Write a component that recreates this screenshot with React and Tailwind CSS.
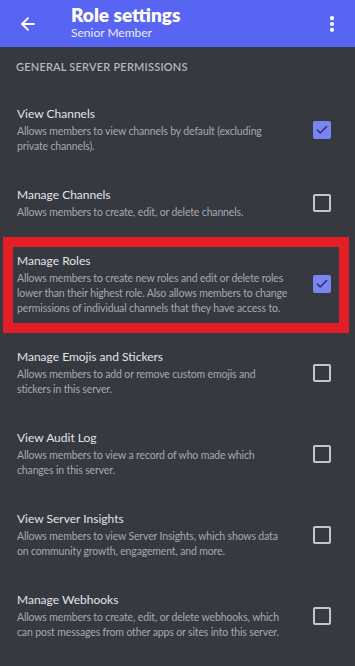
import { ArrowLeft, MoreVertical, Check } from "lucide-react";

// description lines are kept as in the app so the wraps match
const perms = [
  {
    title: "View Channels",
    desc: ["Allows members to view channels by default (excluding", "private channels)."],
    on: true,
  },
  {
    title: "Manage Channels",
    desc: ["Allows members to create, edit, or delete channels."],
    on: false,
  },
  {
    title: "Manage Roles",
    desc: [
      "Allows members to create new roles and edit or delete roles",
      "lower than their highest role. Also allows members to change",
      "permissions of individual channels that they have access to.",
    ],
    on: true,
    marked: true,
  },
  {
    title: "Manage Emojis and Stickers",
    desc: ["Allows members to add or remove custom emojis and", "stickers in this server."],
    on: false,
  },
  {
    title: "View Audit Log",
    desc: ["Allows members to view a record of who made which", "changes in this server."],
    on: false,
  },
  {
    title: "View Server Insights",
    desc: ["Allows members to view Server Insights, which shows data", "on community growth, engagement, and more."],
    on: false,
  },
  {
    title: "Manage Webhooks",
    desc: ["Allows members to create, edit, or delete webhooks, which", "can post messages from other apps or sites into this server."],
    on: false,
  },
];

function Checkbox({ on }) {
  if (on) {
    return (
      <div className="w-[18px] h-[18px] rounded-[2px] bg-[#7b85f2] flex items-center justify-center">
        <Check size={14} strokeWidth={2.5} className="text-[#2c2f5c]" />
      </div>
    );
  }
  return <div className="w-[18px] h-[18px] rounded-[2px] border-2 border-[#c4c6ca]" />;
}

function PermRow({ title, desc, on, marked }) {
  return (
    <div className="relative flex items-center pl-[17px] pr-[24px] py-[16px]">
      <div className="flex-1 min-w-0 pr-[16px]">
        <div className="text-[12px] leading-[18px] text-[#e3e4e6]">{title}</div>
        <div className="mt-[1px] text-[10.5px] leading-[15px] tracking-[-0.15px] text-[#a6a9ae]">
          {desc.map((line) => (
            <div key={line} className="whitespace-nowrap">{line}</div>
          ))}
        </div>
      </div>
      <Checkbox on={on} />
      {marked && (
        <div className="absolute left-[3px] right-[6px] top-[1px] bottom-[-1px] border-[10px] border-[#e41e26] pointer-events-none" />
      )}
    </div>
  );
}

export default function App() {
  return (
    <div
      className="w-[355px] h-[666px] overflow-hidden bg-[#36393f]"
      style={{ fontFamily: "Lato, 'Noto Sans', sans-serif" }}
    >
      {/* Top bar */}
      <div className="h-[47px] bg-[#5865f2] flex items-center">
        <div className="w-[71px] pl-[18px]">
          <ArrowLeft size={20} strokeWidth={2.25} className="text-white" />
        </div>
        <div className="flex-1 -mt-[3px]">
          <div className="text-[19px] leading-[22px] font-extrabold text-white">Role settings</div>
          <div className="text-[12px] leading-[14px] text-[#e8eaff]">Senior Member</div>
        </div>
        <div className="pr-[13px]">
          <MoreVertical size={20} strokeWidth={3} className="text-white" />
        </div>
      </div>

      {/* Section label */}
      <div className="pl-[16px] pt-[12px] pb-[14px] text-[11px] leading-[16px] font-semibold tracking-[0.2px] text-[#b5b8bd] uppercase">
        General Server Permissions
      </div>

      {perms.map((p) => (
        <PermRow key={p.title} {...p} />
      ))}
    </div>
  );
}
